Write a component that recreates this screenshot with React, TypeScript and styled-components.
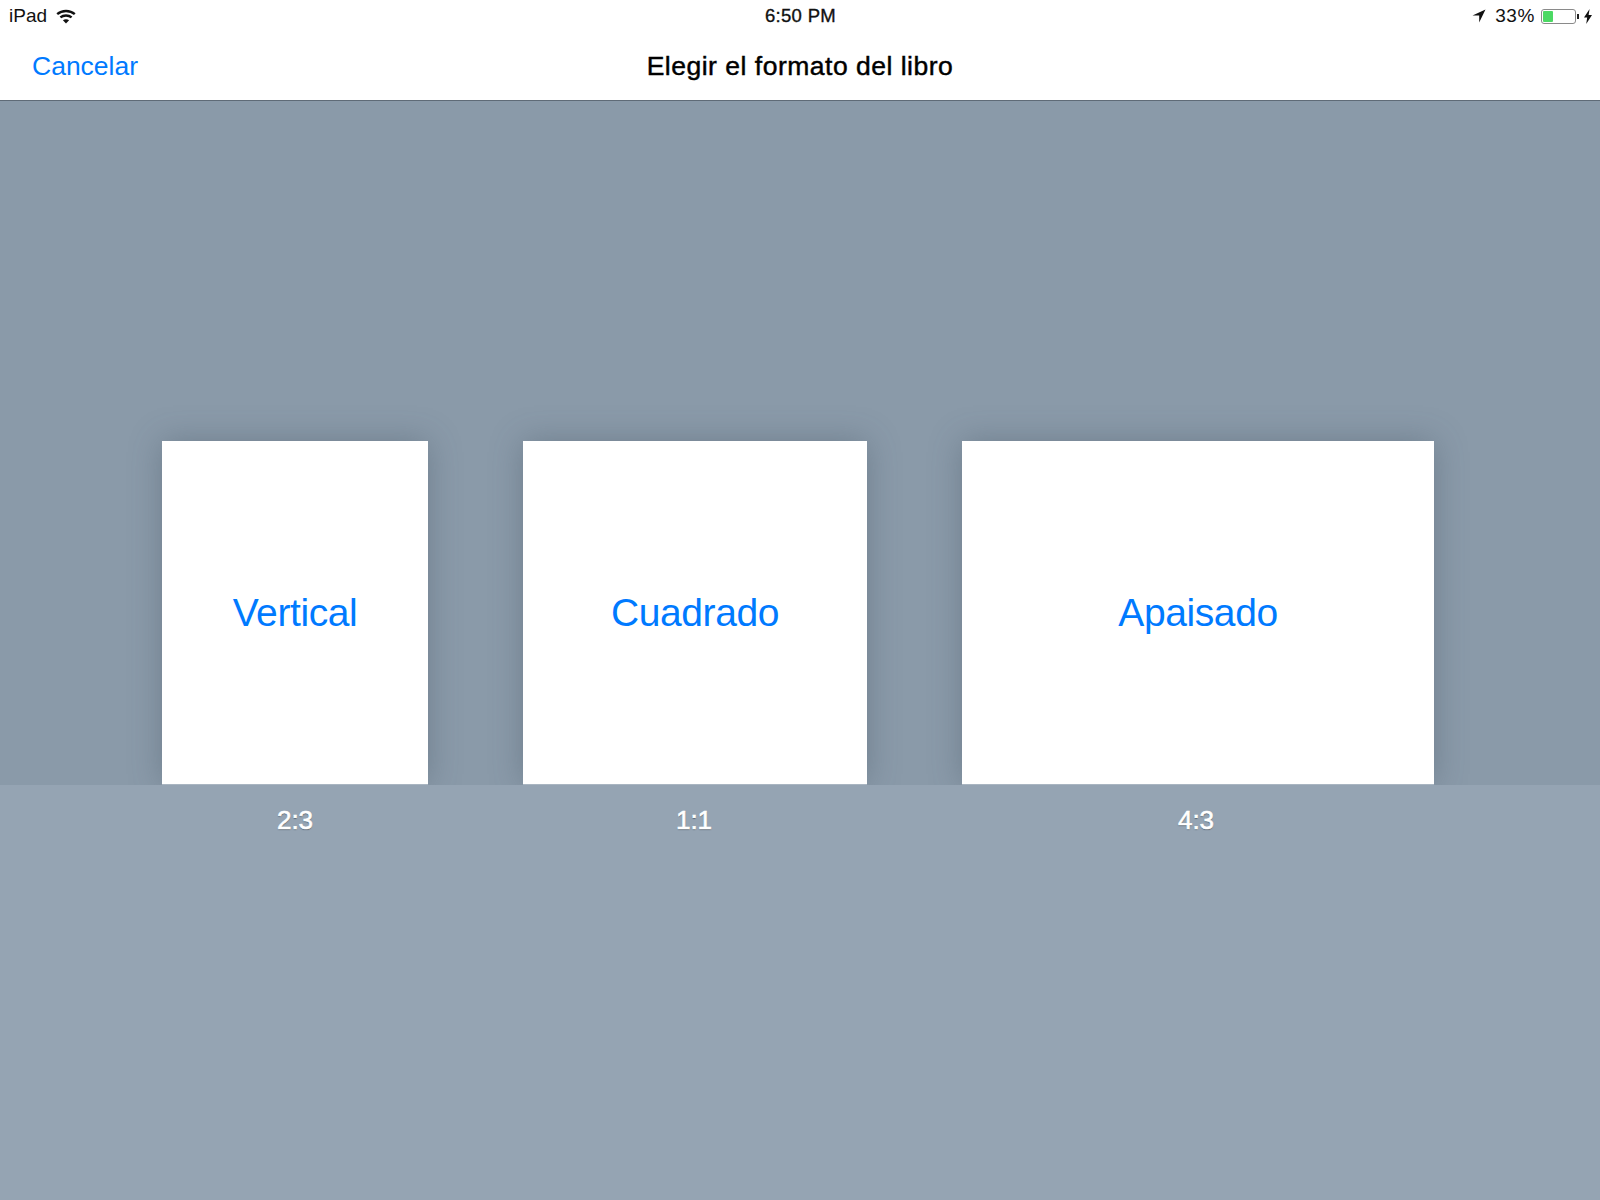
import styled, { createGlobalStyle } from "styled-components";

const formats = [
  { name: "Vertical", ratio: "2:3", width: 266, shift: 0 },
  { name: "Cuadrado", ratio: "1:1", width: 344, shift: -1 },
  { name: "Apaisado", ratio: "4:3", width: 472, shift: -2 },
];

const GlobalStyle = createGlobalStyle`
  html, body {
    margin: 0;
    padding: 0;
    background: #95a4b3;
  }
  body {
    font-family: "Liberation Sans", Arial, sans-serif;
  }
`;

const Page = styled.div`
  width: 1600px;
  height: 1200px;
  display: flex;
  flex-direction: column;
  overflow: hidden;
`;

const Header = styled.header`
  height: 101px;
  background: #fff;
  border-bottom: 1px solid #5f6b77;
  box-sizing: border-box;
  flex: none;
`;

const StatusBar = styled.div`
  height: 32px;
  padding: 0 8px 0 9px;
  display: grid;
  grid-template-columns: 1fr auto 1fr;
  align-items: center;
  font-size: 19px;
  color: #111;
`;

const StatusLeft = styled.div`
  display: flex;
  align-items: center;
  gap: 9px;
`;

const Clock = styled.div`
  font-size: 18.5px;
  letter-spacing: 0.3px;
  -webkit-text-stroke: 0.35px #111;
`;

const StatusRight = styled.div`
  display: flex;
  align-items: center;
  justify-content: flex-end;
`;

const Percent = styled.span`
  margin: 0 6px 0 9px;
  letter-spacing: 0.6px;
`;

const Battery = styled.div`
  width: 35px;
  height: 15px;
  box-sizing: border-box;
  border: 1px solid #8a8a8a;
  border-radius: 3px;
  padding: 1px;
  display: flex;
`;

const BatteryFill = styled.div`
  width: 10px;
  background: #4cd964;
  border-radius: 1px;
`;

const BatteryCap = styled.div`
  width: 2px;
  height: 5px;
  margin: 0 5px 0 1px;
  background: #222;
`;

const NavBar = styled.div`
  height: 68px;
  display: grid;
  grid-template-columns: 1fr auto 1fr;
  align-items: center;
  padding: 0 32px;
`;

const CancelButton = styled.a`
  font-size: 26.5px;
  color: #007aff;
`;

const Title = styled.h1`
  margin: 0;
  font-size: 26.5px;
  font-weight: 400;
  letter-spacing: 0.5px;
  color: #000;
  -webkit-text-stroke: 0.45px #000;
`;

const Stage = styled.main`
  height: 684px;
  flex: none;
  background: #8a9aa9;
  display: flex;
  align-items: flex-end;
  padding-left: 162px;
  gap: 95px;
`;

const Card = styled.button<{ $width: number }>`
  width: ${({ $width }) => $width}px;
  height: 344px;
  padding: 0;
  border: none;
  border-bottom: 1px solid #a9b5c1;
  background: #fff;
  box-shadow: 0 0 30px rgba(70, 85, 100, 0.4);
  clip-path: inset(-60px -60px 0 -60px);
  font-family: inherit;
  font-size: 39px;
  letter-spacing: -0.4px;
  color: #007aff;
`;

const Shelf = styled.section`
  flex: 1;
  background: #95a4b3;
  display: flex;
  padding-left: 162px;
  gap: 95px;
`;

const RatioCell = styled.div<{ $width: number }>`
  width: ${({ $width }) => $width}px;
  padding-top: 20px;
  text-align: center;
`;

const Ratio = styled.span<{ $shift: number }>`
  display: inline-block;
  margin-left: ${({ $shift }) => $shift * 2}px;
  font-size: 26px;
  font-weight: 400;
  color: #fff;
  -webkit-text-stroke: 0.6px #fff;
  text-shadow: 0 1px 1px rgba(60, 70, 80, 0.8);
`;

const WifiIcon = () => (
  <svg width="20" height="15" viewBox="0 0 20 15" fill="none" stroke="#111" strokeWidth="2.4">
    <path d="M1.2 5.2C6 .9 14 .9 18.8 5.2" />
    <path d="M4.4 8.4C7.5 5.8 12.5 5.8 15.6 8.4" />
    <path d="M10 14.5L6.9 11.2C8.6 9.9 11.4 9.9 13.1 11.2Z" fill="#111" stroke="none" />
  </svg>
);

const LocationIcon = () => (
  <svg width="14" height="14" viewBox="0 0 14 14">
    <path d="M13.5.5L.5 6.6H7.2V13.5Z" fill="#111" />
  </svg>
);

const BoltIcon = () => (
  <svg width="8" height="15" viewBox="0 0 8 15">
    <path d="M5.6 0L0 8.5H3.2L2.2 15L8 6H4.6Z" fill="#111" />
  </svg>
);

export default function App() {
  return (
    <Page>
      <GlobalStyle />
      <Header>
        <StatusBar>
          <StatusLeft>
            iPad
            <WifiIcon />
          </StatusLeft>
          <Clock>6:50 PM</Clock>
          <StatusRight>
            <LocationIcon />
            <Percent>33%</Percent>
            <Battery>
              <BatteryFill />
            </Battery>
            <BatteryCap />
            <BoltIcon />
          </StatusRight>
        </StatusBar>
        <NavBar>
          <div>
            <CancelButton>Cancelar</CancelButton>
          </div>
          <Title>Elegir el formato del libro</Title>
          <div />
        </NavBar>
      </Header>
      <Stage>
        {formats.map((f) => (
          <Card key={f.name} $width={f.width}>
            {f.name}
          </Card>
        ))}
      </Stage>
      <Shelf>
        {formats.map((f) => (
          <RatioCell key={f.ratio} $width={f.width}>
            <Ratio $shift={f.shift}>{f.ratio}</Ratio>
          </RatioCell>
        ))}
      </Shelf>
    </Page>
  );
}
